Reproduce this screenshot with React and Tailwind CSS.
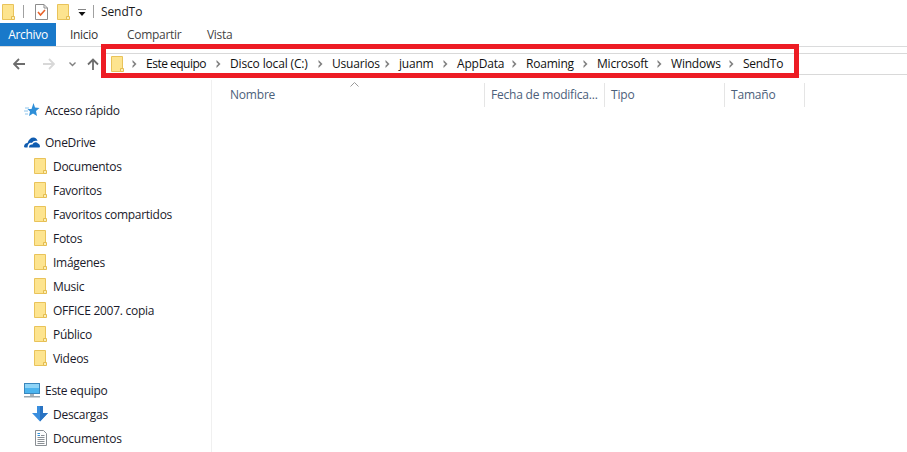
const FONT = "font-['Open_Sans','Noto_Sans',sans-serif]";

const FOLDERS = [
  'Documentos',
  'Favoritos',
  'Favoritos compartidos',
  'Fotos',
  'Imágenes',
  'Music',
  'OFFICE 2007. copia',
  'Público',
  'Videos',
];

const CRUMBS = [
  { label: 'Este equipo', width: 'w-[84px]', track: 'tracking-[-0.5px]' },
  { label: 'Disco local (C:)', width: 'w-[102px]', track: 'tracking-[-0.15px]' },
  { label: 'Usuarios', width: 'w-[67px]', track: 'tracking-[-0.2px]' },
  { label: 'juanm', width: 'w-[58px]', track: 'tracking-[-0.2px]' },
  { label: 'AppData', width: 'w-[69px]', track: 'tracking-[-0.2px]' },
  { label: 'Roaming', width: 'w-[71px]', track: 'tracking-[-0.2px]' },
  { label: 'Microsoft', width: 'w-[74px]', track: 'tracking-[-0.2px]' },
  { label: 'Windows', width: 'w-[72px]', track: 'tracking-[-0.2px]' },
  { label: 'SendTo', width: 'w-[60px]', track: 'tracking-[-0.3px]' },
];

const COLUMNS = [
  { label: 'Nombre', width: 'w-[273px]', pad: 'pl-[18px]' },
  { label: 'Fecha de modifica...', width: 'w-[120px]', pad: 'pl-[6px]' },
  { label: 'Tipo', width: 'w-[120px]', pad: 'pl-[6px]' },
  { label: 'Tamaño', width: 'w-[80px]', pad: 'pl-[6px]' },
];

function FolderIcon({ className }) {
  return (
    <svg viewBox="0 0 13 16" width="13" height="16" className={className}>
      <path d="M0.5 0.5H11.5V15.5H0.5Z" fill="#fde48f" stroke="#e9c35a" />
      <path d="M9.5 15.5V12.5H12.5V15.5Z" fill="#fbeeb8" stroke="#e5bd50" />
    </svg>
  );
}

function NoteIcon() {
  return (
    <svg viewBox="0 0 13 16" width="13" height="16" className="ml-[11px]">
      <path d="M0.5 0.5H9L12.5 4V15.5H0.5Z" fill="#fff" stroke="#8d8d8d" />
      <path d="M9 0.5V4H12.5" fill="none" stroke="#8d8d8d" />
      <path d="M3 8L5.5 11L10 6" fill="none" stroke="#e8622a" strokeWidth="1.6" />
    </svg>
  );
}

function NavArrow({ color, className, flip }) {
  return (
    <svg viewBox="0 0 12 12" width="12" height="12" className={className}>
      <path
        d={flip ? 'M0 6H10.5M6 1L11 6L6 11' : 'M12 6H1.5M6 1L1 6L6 11'}
        fill="none"
        stroke={color}
        strokeWidth="1.8"
      />
    </svg>
  );
}

function Chevron() {
  return (
    <svg viewBox="0 0 5 8" width="5" height="8" className="shrink-0">
      <path d="M0.5 0L4.5 4L0.5 8V5.8L2.3 4L0.5 2.2Z" fill="#808080" />
    </svg>
  );
}

function StarIcon() {
  return (
    <svg viewBox="0 0 16 16" width="16" height="16">
      <path d="M9.5 1L11 5.5L15.5 6L12 9L13 14L9 11.5L5 14L6 9.5L3.5 7H7.5Z" fill="#2f8fd8" />
      <path d="M1 6H5M0 9H4M1 12H4" stroke="#8cc4ec" strokeWidth="1" />
    </svg>
  );
}

function CloudIcon() {
  return (
    <svg viewBox="0 0 16 11" width="16" height="11">
      <path d="M0 10C0 7.5 1.5 6 3.5 6C4.5 2.5 7 0.5 9.5 0.5C11.5 0.5 13 2 13.5 4C11 3.5 9 4 8 6C6 5 3.5 6.5 3.5 10.5H1Z" fill="#0f5cb0" />
      <path d="M5 10.5C5 8 6.5 7 8.5 7.5C9.5 5 12.5 4.5 14 6.5C15.5 7 16 8.5 16 9.5C16 10 15.5 10.5 15 10.5Z" fill="#0f5cb0" />
    </svg>
  );
}

function MonitorIcon() {
  return (
    <svg viewBox="0 0 16 15" width="16" height="15">
      <rect x="0.5" y="0.5" width="15" height="10" fill="#4cb4ee" stroke="#3a87bd" />
      <rect x="1" y="1" width="14" height="4" fill="#8ed4f7" />
      <rect x="6" y="11" width="4" height="2" fill="#a9b4bc" />
      <rect x="0" y="13" width="16" height="1.5" fill="#9aa7b0" />
    </svg>
  );
}

function DownloadIcon() {
  return (
    <svg viewBox="0 0 16 16" width="16" height="16" className="-ml-[2px] mr-[2px]">
      <path d="M5 0H11V7H16L8 15.5L0 7H5Z" fill="#3a8ede" />
      <path d="M8 0H11V7H16L8 15.5Z" fill="#2a73c2" />
    </svg>
  );
}

function DocIcon() {
  return (
    <svg viewBox="0 0 12 16" width="12" height="16" className="ml-[1px]">
      <path d="M0.5 0.5H8.5L11.5 3.5V15.5H0.5Z" fill="#fdfdfd" stroke="#8a8f94" />
      <path d="M2.5 3.5H5M2.5 5.5H5" stroke="#2f8fd8" />
      <path d="M6 5.5H9.5M2.5 7.5H9.5M2.5 9.5H9.5M2.5 11.5H9.5M2.5 13.5H9.5" stroke="#8a8f94" />
    </svg>
  );
}

function TreeRow({ icon, label, nested }) {
  return (
    <div className={`flex h-6 items-center ${nested ? 'pl-[34px]' : 'pl-6'}`}>
      <span className={`flex shrink-0 items-center ${nested ? 'w-[19px]' : 'w-[21px]'}`}>{icon}</span>
      <span className="whitespace-nowrap pt-[2px] text-[12px] tracking-[-0.28px] text-[#1a1a2a]">{label}</span>
    </div>
  );
}

export default function App() {
  return (
    <div className={`relative flex h-[452px] w-[907px] flex-col overflow-hidden bg-white ${FONT}`}>
      {/* quick access bar */}
      <div className="flex h-[23px] shrink-0 items-center pl-[2px]">
        <FolderIcon />
        <span className="ml-2 h-[13px] w-px bg-[#a0a0a0]" />
        <NoteIcon />
        <FolderIcon className="ml-[9px]" />
        <svg viewBox="0 0 8 8" width="8" height="8" className="ml-2 mt-[3px]">
          <path d="M0 0H8" stroke="#111" strokeWidth="1" />
          <path d="M0.5 3H7.5L4 7Z" fill="#111" />
        </svg>
        <span className="ml-[7px] h-[13px] w-px bg-[#a0a0a0]" />
        <span className="ml-[7px] text-[12px] tracking-[-0.1px] text-[#1a1a1a]">SendTo</span>
      </div>

      {/* ribbon tabs */}
      <div className="flex h-6 shrink-0 border-b border-[#dadbdc] text-[12px] tracking-[-0.3px]">
        <div className="flex h-[23px] w-14 items-center justify-center bg-[#1979ca] text-white">Archivo</div>
        <div className="flex h-[23px] w-[71px] items-center pl-[14px] text-[#333]">Inicio</div>
        <div className="flex h-[23px] w-20 items-center text-[#444]">Compartir</div>
        <div className="flex h-[23px] items-center text-[#444]">Vista</div>
      </div>

      {/* navigation + address */}
      <div className="flex h-[33px] shrink-0 items-center pt-[1px]">
        <NavArrow color="#6d6d6d" className="ml-[13px]" />
        <NavArrow color="#d8d8d8" className="ml-[18px]" flip />
        <svg viewBox="0 0 7 5" width="7" height="5" className="ml-[14px]">
          <path d="M0.5 0.5L3.5 3.5L6.5 0.5" fill="none" stroke="#808080" strokeWidth="1.4" />
        </svg>
        <svg viewBox="0 0 12 12" width="12" height="12" className="ml-[11px]">
          <path d="M6 12V1.5M1 6.5L6 1.5L11 6.5" fill="none" stroke="#6d6d6d" strokeWidth="1.8" />
        </svg>
        <div className="ml-[5px] flex h-[22px] flex-1 items-center border-y border-[#d9d9d9] pl-[7px] text-[12px] text-[#111]">
          <FolderIcon className="shrink-0" />
          <div className="ml-2 flex">
            {CRUMBS.map((crumb) => (
              <div key={crumb.label} className={`flex items-center gap-[9px] ${crumb.width}`}>
                <Chevron />
                <span className={`-mt-px whitespace-nowrap ${crumb.track}`}>{crumb.label}</span>
              </div>
            ))}
          </div>
        </div>
      </div>

      {/* body */}
      <div className="flex min-h-0 flex-1">
        <aside className="w-[212px] shrink-0 border-r border-[#f0f0f0] pt-[18px]">
          <TreeRow icon={<StarIcon />} label="Acceso rápido" />
          <div className="mt-2">
            <TreeRow icon={<CloudIcon />} label="OneDrive" />
            {FOLDERS.map((name) => (
              <TreeRow key={name} icon={<FolderIcon />} label={name} nested />
            ))}
          </div>
          <div className="mt-2">
            <TreeRow icon={<MonitorIcon />} label="Este equipo" />
            <TreeRow icon={<DownloadIcon />} label="Descargas" nested />
            <TreeRow icon={<DocIcon />} label="Documentos" nested />
          </div>
        </aside>

        <main className="relative flex-1 pt-[3px]">
          <div className="flex h-[24px] text-[12px] tracking-[-0.2px] text-[#4c607a]">
            {COLUMNS.map((col) => (
              <div key={col.label} className={`flex items-center whitespace-nowrap border-r border-[#e5e5e5] ${col.width} ${col.pad}`}>
                {col.label}
              </div>
            ))}
          </div>
          {/* sort caret */}
          <svg viewBox="0 0 9 5" width="9" height="5" className="absolute left-[138px] top-[2px]">
            <path d="M0.5 4.5L4.5 0.5L8.5 4.5" fill="none" stroke="#9a9a9a" />
          </svg>
        </main>
      </div>

      {/* red annotation box */}
      <div className="absolute left-[101px] top-[44px] h-[34px] w-[698px] border-[5px] border-[#ed1c24]" />
    </div>
  );
}
